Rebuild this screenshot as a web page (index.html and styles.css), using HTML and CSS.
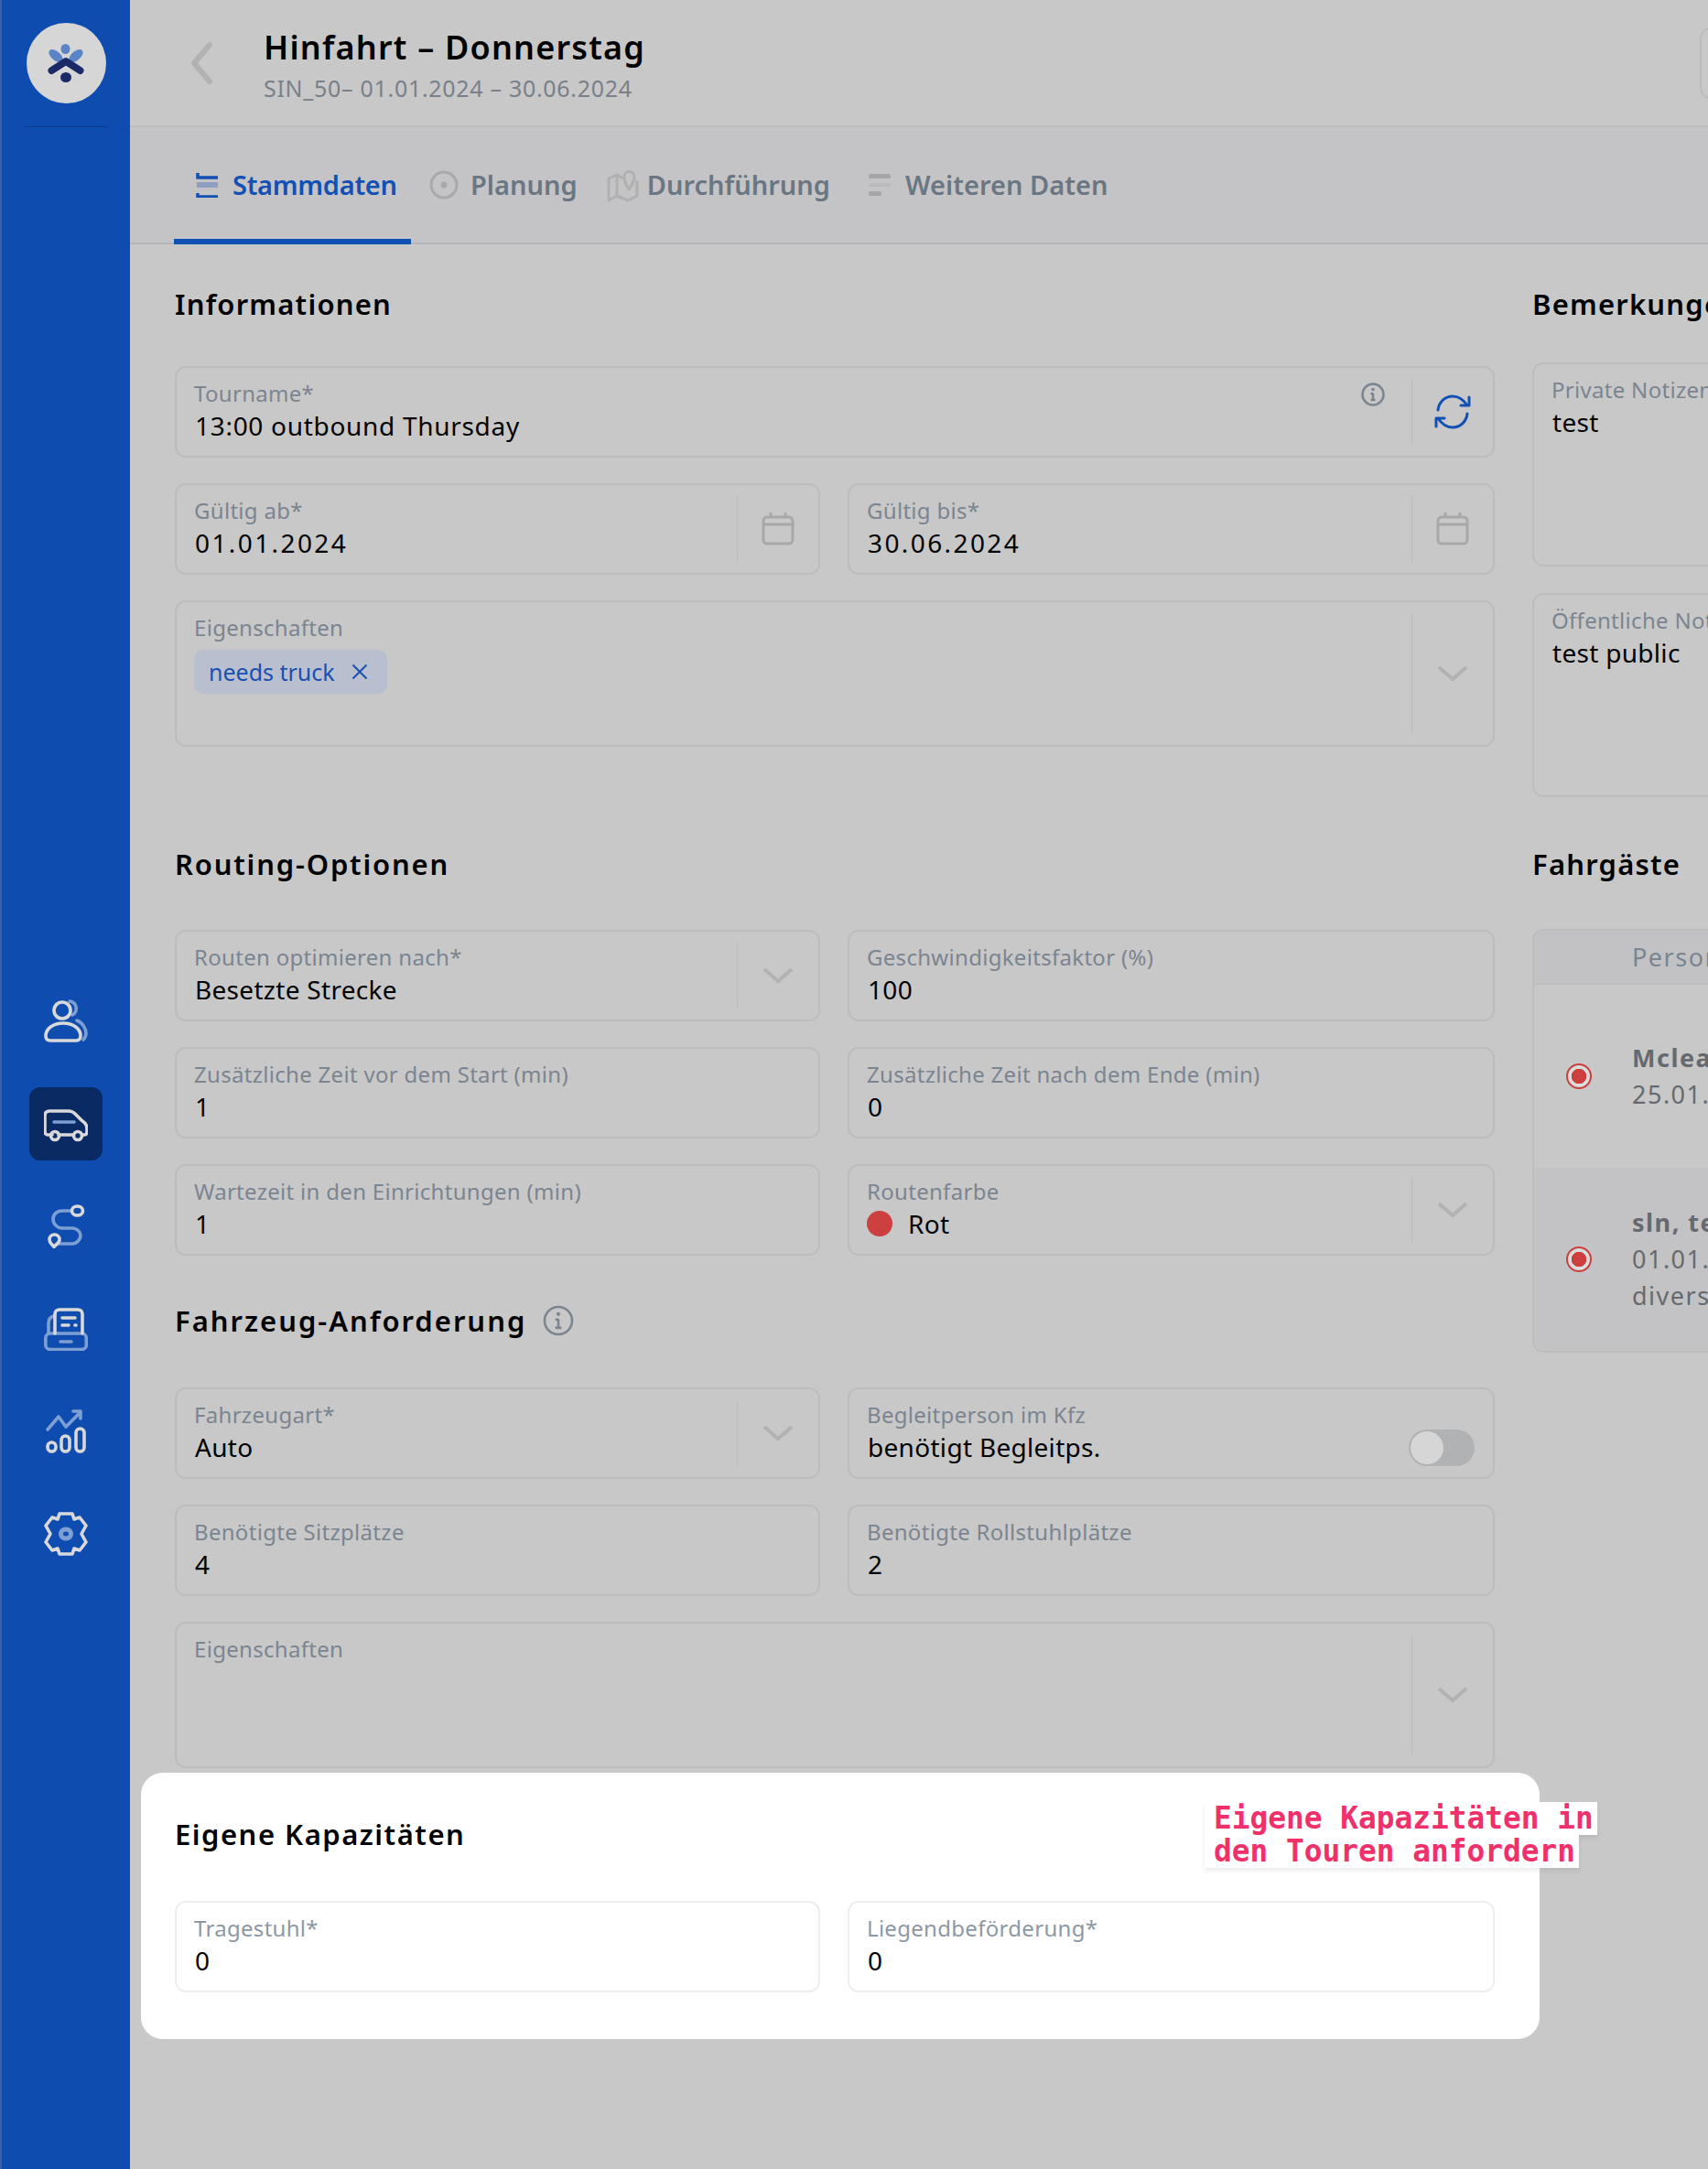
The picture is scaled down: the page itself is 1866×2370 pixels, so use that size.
FILE: index.html
```html
<!DOCTYPE html>
<html lang="de">
<head>
  <meta charset="UTF-8">
  <title>Hinfahrt - Donnerstag</title>
  <link rel="stylesheet" href="styles.css">
</head>
<body>
  <aside class="sidebar">
    <div class="logo">
      <svg width="40" height="42" viewBox="0 0 40 42">
        <ellipse cx="19.5" cy="5.5" rx="5" ry="5.5" fill="#5a84c8"/>
        <ellipse cx="9" cy="13" rx="9" ry="5" transform="rotate(40 9 13)" fill="#5a84c8"/>
        <ellipse cx="31" cy="13" rx="9" ry="5" transform="rotate(-40 31 13)" fill="#5a84c8"/>
        <path d="M4.5 29 L20 19 L35.500 29" fill="none" stroke="#1b2a66" stroke-width="8" stroke-linecap="round" stroke-linejoin="round"/>
        <ellipse cx="20" cy="36.500" rx="6" ry="5.500" fill="#1b2a66"/>
      </svg>
    </div>
    <div class="sidebar-line"></div>
    <nav class="nav">
      <div class="nav-item">
        <svg width="48" height="48" viewBox="0 0 48 48" fill="none" stroke-width="3.600" stroke-linecap="round" stroke-linejoin="round">
          <path d="M28 2 a8 8 0 0 1 3 15" stroke="#7d9fd4"/>
          <path d="M36 23 c6 2 10 9 10 14 c0 3 -1 5 -3 7" stroke="#7d9fd4"/>
          <circle cx="20" cy="12" r="9" stroke="#d9d9d9"/>
          <path d="M2 40 c0 -8 8 -14 19 -14 s19 6 19 14 c0 4 -3 5 -5 5 h-28 c-3 0 -5 -1 -5 -5 z" stroke="#d9d9d9"/>
        </svg>
      </div>
      <div class="nav-item nav-active">
        <svg width="48" height="48" viewBox="0 0 48 48" fill="none" stroke-width="3.600" stroke-linecap="round" stroke-linejoin="round">
          <path d="M9 36 H4 c-1.500 0 -3 -1.500 -3 -3 V15 c0 -3 2 -5 5 -5 H27 c3 0 5 1 7 3 l7 7 c3 2 6 5 6 9 v4 c0 2 -1 3 -3 3 h-2 M16 36 H32" stroke="#d9d9d9"/>
          <circle cx="12" cy="37" r="4.500" stroke="#d9d9d9"/>
          <circle cx="37" cy="37" r="4.500" stroke="#d9d9d9"/>
          <path d="M11 22 H33" stroke="#7d9fd4"/>
        </svg>
      </div>
      <div class="nav-item">
        <svg width="48" height="48" viewBox="0 0 48 48" fill="none" stroke-width="3.600" stroke-linecap="round" stroke-linejoin="round">
          <path d="M30 7 H20 C14 7 10 11 10 16 S14 26 20 26 H31 C36 26 40 30 40 34 S36 43 31 43 H17" stroke="#7d9fd4"/>
          <ellipse cx="36.500" cy="7" rx="6" ry="5" stroke="#d9d9d9"/>
          <path d="M11 46.500 c-2 -3 -5 -4 -5 -8 a5.500 5.500 0 0 1 11 0 c0 4 -4 5 -6 8 z" stroke="#d9d9d9"/>
        </svg>
      </div>
      <div class="nav-item">
        <svg width="48" height="48" viewBox="0 0 48 48" fill="none" stroke-width="3.600" stroke-linecap="round" stroke-linejoin="round">
          <path d="M11 10 c-4 1 -6 4 -6 8 V29" stroke="#7d9fd4"/>
          <rect x="1.800" y="29" width="44.500" height="17.500" rx="5" stroke="#7d9fd4"/>
          <path d="M12 29 V8 c0 -3 2 -5 5 -5 h20 c3 0 5 2 5 5 V29" stroke="#d9d9d9"/>
          <path d="M20 12 H34 M20 20 H27 M34 20 H35" stroke="#d9d9d9"/>
          <path d="M18 38 H30" stroke="#7d9fd4"/>
        </svg>
      </div>
      <div class="nav-item">
        <svg width="48" height="48" viewBox="0 0 48 48" fill="none" stroke-width="3.600" stroke-linecap="round" stroke-linejoin="round">
          <path d="M4 22 L16 8 L24 19 L40 3 M32 2 H40 V10" stroke="#7d9fd4"/>
          <rect x="4" y="36" width="9" height="10" rx="4.500" stroke="#d9d9d9"/>
          <rect x="19" y="29" width="9" height="17" rx="4.500" stroke="#d9d9d9"/>
          <rect x="35" y="21" width="9" height="25" rx="4.500" stroke="#d9d9d9"/>
        </svg>
      </div>
      <div class="nav-item">
        <svg width="48" height="48" viewBox="0 0 48 48" fill="none" stroke-width="3.600" stroke-linejoin="round">
          <path d="M17 2 H31 L33 8 L39 6 L46 15 L41 24 L46 33 L39 42 L33 40 L31 46 H17 L15 40 L9 42 L2 33 L7 24 L2 15 L9 6 L15 8 Z" stroke="#d9d9d9"/>
          <ellipse cx="24" cy="24" rx="5.500" ry="5" stroke="#7d9fd4" stroke-width="5"/>
        </svg>
      </div>
    </nav>
  </aside>

  <main class="main">
    <header class="top">
      <svg class="back" width="24" height="46" viewBox="0 0 24 46" fill="none">
        <path d="M21 3 L4 23 L21 43" stroke="#b2b2b2" stroke-width="6" stroke-linecap="round" stroke-linejoin="round"/>
      </svg>
      <div class="top-title">
        <h1>Hinfahrt – Donnerstag</h1>
        <div class="top-sub">SIN_50– 01.01.2024 – 30.06.2024</div>
      </div>
      <div class="top-button"></div>
    </header>

    <div class="tabs">
      <div class="tab tab-active">
        <svg width="24" height="28" viewBox="0 0 24 28">
          <path d="M2 1 V6 H24 M2 23 V27 H24" fill="none" stroke="#1250b4" stroke-width="3.500"/>
          <rect x="1" y="11" width="23" height="6" fill="#8e9fc0"/>
        </svg>
        <span>Stammdaten</span>
      </div>
      <div class="tab tab-plan">
        <svg width="32" height="32" viewBox="0 0 32 32" fill="none">
          <circle cx="16" cy="16" r="14" stroke="#a9a9a9" stroke-width="3"/>
          <circle cx="16" cy="16" r="3.500" fill="#a9a9a9"/>
        </svg>
        <span>Planung</span>
      </div>
      <div class="tab tab-map">
        <svg width="35" height="38" viewBox="0 0 35 38" fill="none" stroke="#b0b0b0" stroke-width="3" stroke-linejoin="round">
          <path d="M2 12 L11 8 V31 L2 36 Z M11 8 L18 12 M11 31 L23 36 L33 31 V14"/>
          <path d="M24 24 c-3 -5 -5 -8 -5 -14 a5.500 5.500 0 0 1 11 0 c0 6 -3 9 -6 14 z"/>
        </svg>
        <span>Durchführung</span>
      </div>
      <div class="tab tab-last">
        <svg width="24" height="26" viewBox="0 0 24 26">
          <rect y="1" width="24" height="5" rx="2" fill="#a6a6a6"/>
          <rect y="11" width="24" height="4" rx="2" fill="#bbbbbb"/>
          <rect y="20" width="14" height="5" rx="2" fill="#a6a6a6"/>
        </svg>
        <span>Weiteren Daten</span>
      </div>
    </div>

    <div class="content">
      <div class="col-left">
        <section class="section-info">
          <h2>Informationen</h2>
          <div class="fields">
            <div class="field wide">
              <div class="field-body">
                <div class="field-label">Tourname*</div>
                <div class="field-value field-name">13:00 outbound Thursday</div>
              </div>
              <svg class="field-info" width="26" height="26" viewBox="0 0 26 26" fill="none">
                <circle cx="13" cy="13" r="11.500" stroke="#7b8590" stroke-width="2.500"/>
                <path d="M13 11.500 V19 M10.500 12 H13 M10.500 19 H15.500" stroke="#7b8590" stroke-width="2.500"/>
                <circle cx="13" cy="7.500" r="1.800" fill="#7b8590"/>
              </svg>
              <div class="field-addon">
                <svg width="40" height="38" viewBox="0 0 40 38" fill="none" stroke="#1250b4" stroke-width="3" stroke-linecap="round" stroke-linejoin="round">
                  <path d="M4 17 C5 8 12 2 20 2 c7 0 12 4 16 10 M38 3 V12 H29"/>
                  <path d="M36 21 C35 30 28 36 20 36 c-7 0 -12 -4 -16 -10 M2 35 V26 H11"/>
                </svg>
              </div>
            </div>
            <div class="field">
              <div class="field-body">
                <div class="field-label">Gültig ab*</div>
                <div class="field-value field-date">01.01.2024</div>
              </div>
              <div class="field-addon">
                <svg class="cal" width="36" height="36" viewBox="0 0 36 36" fill="none" stroke="#a8a8a8" stroke-width="3">
                  <rect x="2" y="5" width="32" height="29" rx="4"/>
                  <path d="M2 13 H34 M10 0 V5 M26 0 V5"/>
                </svg>
              </div>
            </div>
            <div class="field">
              <div class="field-body">
                <div class="field-label">Gültig bis*</div>
                <div class="field-value field-date">30.06.2024</div>
              </div>
              <div class="field-addon">
                <svg class="cal" width="36" height="36" viewBox="0 0 36 36" fill="none" stroke="#a8a8a8" stroke-width="3">
                  <rect x="2" y="5" width="32" height="29" rx="4"/>
                  <path d="M2 13 H34 M10 0 V5 M26 0 V5"/>
                </svg>
              </div>
            </div>
            <div class="field wide tall">
              <div class="field-body">
                <div class="field-label">Eigenschaften</div>
                <div class="chip">
                  <span>needs truck</span>
                  <svg width="18" height="18" viewBox="0 0 18 18" fill="none">
                    <path d="M1.500 1.500 L16.500 16.500 M16.500 1.500 L1.500 16.500" stroke="#1a50b0" stroke-width="2"/>
                  </svg>
                </div>
              </div>
              <div class="field-addon">
                <svg width="34" height="18" viewBox="0 0 34 18" fill="none">
                  <path d="M2 2 L17 15 L32 2" stroke="#b2b2b2" stroke-width="4"/>
                </svg>
              </div>
            </div>
          </div>
        </section>

        <section class="section-routing">
          <h2>Routing-Optionen</h2>
          <div class="fields">
            <div class="field">
              <div class="field-body">
                <div class="field-label">Routen optimieren nach*</div>
                <div class="field-value">Besetzte Strecke</div>
              </div>
              <div class="field-addon">
                <svg width="34" height="18" viewBox="0 0 34 18" fill="none">
                  <path d="M2 2 L17 15 L32 2" stroke="#b2b2b2" stroke-width="4"/>
                </svg>
              </div>
            </div>
            <div class="field">
              <div class="field-body">
                <div class="field-label">Geschwindigkeitsfaktor (%)</div>
                <div class="field-value">100</div>
              </div>
            </div>
            <div class="field">
              <div class="field-body">
                <div class="field-label">Zusätzliche Zeit vor dem Start (min)</div>
                <div class="field-value">1</div>
              </div>
            </div>
            <div class="field">
              <div class="field-body">
                <div class="field-label">Zusätzliche Zeit nach dem Ende (min)</div>
                <div class="field-value">0</div>
              </div>
            </div>
            <div class="field">
              <div class="field-body">
                <div class="field-label">Wartezeit in den Einrichtungen (min)</div>
                <div class="field-value">1</div>
              </div>
            </div>
            <div class="field">
              <div class="field-body">
                <div class="field-label">Routenfarbe</div>
                <div class="field-value color-value"><span class="color-dot"></span>Rot</div>
              </div>
              <div class="field-addon">
                <svg width="34" height="18" viewBox="0 0 34 18" fill="none">
                  <path d="M2 2 L17 15 L32 2" stroke="#b2b2b2" stroke-width="4"/>
                </svg>
              </div>
            </div>
          </div>
        </section>

        <section class="section-vehicle">
          <h2 class="title-with-icon">
            Fahrzeug-Anforderung
            <svg width="34" height="34" viewBox="0 0 26 26" fill="none">
              <circle cx="13" cy="13" r="11.500" stroke="#7b8590" stroke-width="2"/>
              <path d="M13 11.500 V19 M10.500 12 H13 M10.500 19 H15.500" stroke="#7b8590" stroke-width="2"/>
              <circle cx="13" cy="7.500" r="1.600" fill="#7b8590"/>
            </svg>
          </h2>
          <div class="fields">
            <div class="field">
              <div class="field-body">
                <div class="field-label">Fahrzeugart*</div>
                <div class="field-value">Auto</div>
              </div>
              <div class="field-addon">
                <svg width="34" height="18" viewBox="0 0 34 18" fill="none">
                  <path d="M2 2 L17 15 L32 2" stroke="#b2b2b2" stroke-width="4"/>
                </svg>
              </div>
            </div>
            <div class="field">
              <div class="field-body">
                <div class="field-label">Begleitperson im Kfz</div>
                <div class="field-value">benötigt Begleitps.</div>
              </div>
              <div class="toggle"><span class="toggle-knob"></span></div>
            </div>
            <div class="field">
              <div class="field-body">
                <div class="field-label">Benötigte Sitzplätze</div>
                <div class="field-value">4</div>
              </div>
            </div>
            <div class="field">
              <div class="field-body">
                <div class="field-label">Benötigte Rollstuhlplätze</div>
                <div class="field-value">2</div>
              </div>
            </div>
            <div class="field wide tall">
              <div class="field-body">
                <div class="field-label">Eigenschaften</div>
              </div>
              <div class="field-addon">
                <svg width="34" height="18" viewBox="0 0 34 18" fill="none">
                  <path d="M2 2 L17 15 L32 2" stroke="#b2b2b2" stroke-width="4"/>
                </svg>
              </div>
            </div>
          </div>
        </section>

        <section class="highlight">
          <h2>Eigene Kapazitäten</h2>
          <div class="fields">
            <div class="field">
              <div class="field-body">
                <div class="field-label">Tragestuhl*</div>
                <div class="field-value">0</div>
              </div>
            </div>
            <div class="field">
              <div class="field-body">
                <div class="field-label">Liegendbeförderung*</div>
                <div class="field-value">0</div>
              </div>
            </div>
          </div>
          <div class="callout">
            <span class="callout-line">Eigene Kapazitäten in</span>
            <span class="callout-line">den Touren anfordern</span>
          </div>
        </section>
      </div>

      <div class="col-right">
        <h2>Bemerkungen</h2>
        <div class="notes">
          <div class="field note">
            <div class="field-body">
              <div class="field-label">Private Notizen</div>
              <div class="field-value">test</div>
            </div>
          </div>
          <div class="field note">
            <div class="field-body">
              <div class="field-label">Öffentliche Notizen</div>
              <div class="field-value">test public</div>
            </div>
          </div>
        </div>

        <h2 class="passengers-title">Fahrgäste</h2>
        <div class="passengers">
          <div class="passengers-head">Person</div>
          <div class="passenger">
            <span class="radio"></span>
            <div class="passenger-text">
              <strong>Mclean, Anna</strong>
              <span>25.01.1990</span>
            </div>
          </div>
          <div class="passenger passenger-alt">
            <span class="radio"></span>
            <div class="passenger-text">
              <strong>sln, test</strong>
              <span>01.01.2000</span>
              <span>divers</span>
            </div>
          </div>
        </div>
      </div>
    </div>
  </main>
</body>
</html>
```

FILE: styles.css
```css
* {
  box-sizing: border-box;
  margin: 0;
  padding: 0;
}

html, body {
  height: 2370px;
  overflow: hidden;
}

body {
  display: flex;
  width: 1866px;
  background: #c8c8c8;
  color: #000;
  font-family: 'Noto Sans', sans-serif;
}

svg {
  flex-shrink: 0;
}

/* sidebar */
.sidebar {
  width: 142px;
  flex-shrink: 0;
  background: #0f4cb0;
  border-left: 2px solid #3c5f9f;
  padding-top: 25px;
  display: flex;
  flex-direction: column;
  align-items: center;
}

.logo {
  width: 87px;
  height: 88px;
  border-radius: 50%;
  background: #d6d6d6;
  display: flex;
  align-items: center;
  justify-content: center;
}

.sidebar-line {
  width: 91px;
  height: 1px;
  margin-top: 25px;
  background: #0c3a8a;
}

.nav {
  margin-top: 937px;
  display: flex;
  flex-direction: column;
  gap: 32px;
}

.nav-item {
  width: 80px;
  height: 80px;
  border-radius: 12px;
  display: flex;
  align-items: center;
  justify-content: center;
}

.nav-active {
  background: #0a2a64;
}

/* header */
.main {
  width: 1724px;
  flex-shrink: 0;
  overflow: hidden;
}

.top {
  height: 139px;
  padding-left: 66px;
  display: flex;
  align-items: center;
  border-bottom: 2px solid #bcbcbc;
}

.top-title {
  flex: 1;
  margin-left: 56px;
  padding-top: 3px;
}

.top-title h1 {
  font-size: 36px;
  line-height: 48px;
  font-weight: 600;
  letter-spacing: 1.2px;
}

.top-sub {
  margin-top: 4px;
  font-size: 25px;
  line-height: 32px;
  color: #7a8088;
  letter-spacing: 0.7px;
}

.top-button {
  width: 200px;
  height: 78px;
  margin-right: -191px;
  flex-shrink: 0;
  border: 2px solid #bcbcbc;
  border-radius: 12px;
}

/* tabs */
.tabs {
  height: 128px;
  padding-left: 48px;
  display: flex;
  background: #c4c4c6;
  border-bottom: 2px solid #b4b6ba;
}

.tab {
  height: 128px;
  padding-bottom: 3px;
  display: flex;
  align-items: center;
  gap: 16px;
  font-size: 29px;
  font-weight: 600;
  color: #6b7683;
}

.tab-active {
  width: 259px;
  padding-left: 24px;
  color: #1250b4;
  letter-spacing: -0.3px;
  box-shadow: inset 0 -6px 0 #1250b4;
}

.tab-plan {
  margin-left: 20px;
  gap: 13px;
}

.tab-map {
  margin-left: 32px;
  gap: 9px;
}

.tab-last {
  margin-left: 42px;
}

/* form */
.content {
  padding: 41px 0 0 49px;
  display: grid;
  grid-template-columns: 1442px 600px;
  column-gap: 41px;
}

h2 {
  font-size: 31px;
  line-height: 48px;
  font-weight: 600;
  letter-spacing: 1.2px;
}

.section-info h2 {
  margin-bottom: 44px;
}

.section-routing {
  margin-top: 104px;
}

.section-routing h2 {
  margin-bottom: 48px;
  letter-spacing: 1.8px;
}

.section-vehicle {
  margin-top: 47px;
}

.section-vehicle h2 {
  margin-bottom: 49px;
  letter-spacing: 2px;
}

.title-with-icon {
  display: flex;
  align-items: center;
  gap: 18px;
}

.fields {
  display: grid;
  grid-template-columns: 705fr 707fr;
  gap: 28px 30px;
}

.field {
  height: 100px;
  display: flex;
  border: 2px solid #bdbdbd;
  border-radius: 12px;
}

.wide {
  grid-column: span 2;
}

.tall {
  height: 160px;
}

.field-body {
  flex: 1;
  padding: 12px 0 0 19px;
  min-width: 0;
}

.field-label {
  font-size: 24px;
  line-height: 32px;
  color: #7b8590;
  letter-spacing: 0.3px;
  white-space: nowrap;
}

.field-value {
  margin: 1px 0 0 1px;
  font-size: 28px;
  line-height: 36px;
  letter-spacing: 0.3px;
  white-space: nowrap;
}

.field-name {
  letter-spacing: 0.7px;
}

.field-date {
  letter-spacing: 2.4px;
}

.field-info {
  margin: 16px 29px 0 0;
}

.field-addon {
  width: 89px;
  margin: 12px 0;
  flex-shrink: 0;
  border-left: 1px solid #bbbbbb;
  display: flex;
  align-items: center;
  justify-content: center;
}

.chip {
  width: 211px;
  height: 48px;
  margin-top: 8px;
  padding: 0 21px 0 16px;
  display: flex;
  align-items: center;
  justify-content: space-between;
  background: #b8bfcf;
  border-radius: 10px;
  color: #1a50b0;
  font-size: 25px;
}

.color-value {
  margin-left: 0;
  display: flex;
  align-items: center;
  gap: 17px;
}

.color-dot {
  width: 28px;
  height: 28px;
  border-radius: 50%;
  background: #cc4040;
}

.toggle {
  width: 72px;
  height: 40px;
  margin: 44px 20px 0 0;
  flex-shrink: 0;
  padding: 2px;
  border-radius: 20px;
  background: #b0b2b4;
}

.toggle-knob {
  display: block;
  width: 36px;
  height: 36px;
  border-radius: 50%;
  background: #d6d6d6;
}

/* highlighted card */
.highlight {
  position: relative;
  margin: 5px -49px 0 -37px;
  height: 291px;
  padding: 43px 49px 0 37px;
  background: #fff;
  border-radius: 24px;
}

.highlight h2 {
  margin-bottom: 49px;
  letter-spacing: 1.5px;
}

.highlight .field {
  border-color: #eeeeee;
}

.highlight .field-label {
  color: #8d98a6;
}

.callout {
  position: absolute;
  top: 32px;
  left: 1162px;
  display: flex;
  flex-direction: column;
  align-items: flex-start;
  font-family: 'DejaVu Sans Mono', monospace;
  font-size: 32.800px;
  font-weight: 700;
  line-height: 36px;
  color: #f0306a;
  white-space: nowrap;
}

.callout-line {
  padding: 0 4px 0 10px;
  background: #fff;
  box-shadow: 0 3px 5px rgba(0, 0, 0, 0.08);
}

/* right column */
.notes {
  margin-top: 40px;
  display: flex;
  flex-direction: column;
  gap: 29px;
}

.note {
  height: 223px;
}

.passengers-title {
  margin: 49px 0 47px;
}

.passengers {
  border: 2px solid #bdbdbd;
  border-radius: 12px;
}

.passengers-head {
  height: 59px;
  padding-left: 107px;
  display: flex;
  align-items: center;
  background: #c2c2c4;
  border-bottom: 2px solid #bcbcbc;
  border-radius: 12px 12px 0 0;
  font-size: 27px;
  color: #7b8590;
  letter-spacing: 1.5px;
}

.passenger {
  height: 200px;
  display: flex;
  align-items: center;
  padding-left: 35px;
  gap: 44px;
}

.passenger-alt {
  background: #c3c3c5;
  border-radius: 0 0 12px 12px;
}

.radio {
  width: 28px;
  height: 28px;
  flex-shrink: 0;
  border: 2px solid #cc4040;
  border-radius: 50%;
  background: radial-gradient(circle, #cc4040 0 8px, #dcdcdc 8.500px);
}

.passenger-text {
  display: flex;
  flex-direction: column;
  font-size: 27px;
  line-height: 40px;
  color: #666a6e;
  letter-spacing: 1.5px;
  white-space: nowrap;
}
```
